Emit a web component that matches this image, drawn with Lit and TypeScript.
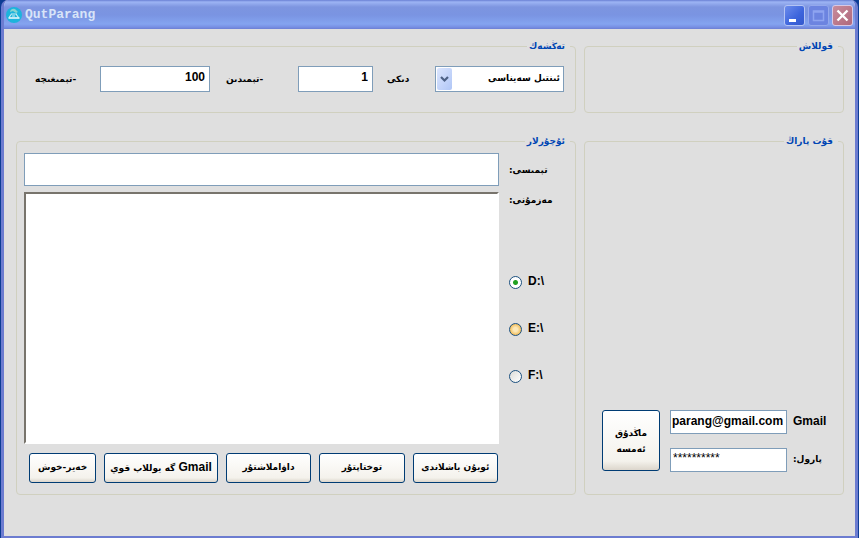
import { LitElement, html, css } from "lit";
import { customElement, state } from "lit/decorators.js";

@customElement("app-root")
class AppRoot extends LitElement {
  @state() private drive = "D";

  static styles = css`
    :host {
      display: block;
      min-height: 100vh;
      padding: 0 1px;
      background: #0c3c94;
      font: bold 12px/16px "Liberation Sans", "DejaVu Sans", sans-serif;
      color: #000;
    }
    :host,
    * {
      box-sizing: border-box;
    }
    .window {
      display: flex;
      flex-direction: column;
      min-height: 100vh;
      border: solid #6c7cd0;
      border-width: 0 3px 2px;
      border-radius: 7px 7px 0 0;
      background: #dfdfdf;
      overflow: hidden;
    }
    .titlebar {
      display: flex;
      align-items: center;
      gap: 3px;
      height: 29px;
      margin: 0 -3px;
      padding: 1px 5px 0 5px;
      background: linear-gradient(#6a80d4 0, #9db4f4 2px, #7d95e0 7px, #7a94e2 15px, #84a4f0 24px, #7890e4 27px, #6c7fd4 29px);
    }
    .logo {
      width: 16px;
      height: 16px;
    }
    .title {
      flex: 1;
      margin: 0;
      font: bold 13px/16px "Liberation Mono", monospace;
      color: #d8e4f8;
    }
    .winbtn {
      width: 21px;
      height: 21px;
      padding: 0;
      border: 1px solid #b4c4f4;
      border-radius: 3px;
      background: linear-gradient(135deg, #6c8cec, #3c64dc 60%, #3458cc);
    }
    .winbtn svg {
      display: block;
      width: 19px;
      height: 19px;
    }
    .max {
      border-color: #94a8ec;
      background: #6c84e0;
    }
    .close {
      border-color: #d8c8e4;
      background: linear-gradient(135deg, #c88c9c, #b0687c);
    }
    .content {
      flex: 1;
      display: grid;
      grid-template-columns: minmax(0, 560fr) minmax(0, 260fr);
      align-content: start;
      gap: 20px 8px;
      padding: 9px 11px 20px 12px;
    }
    .group {
      position: relative;
      isolation: isolate;
      display: flex;
      flex-direction: column;
      min-width: 0;
    }
    .group::before {
      content: "";
      position: absolute;
      z-index: -1;
      inset: 8px 0 0;
      border: 1px solid #d0d0bf;
      border-radius: 4px;
    }
    .caption {
      align-self: flex-end;
      margin: 0 6px 0 0;
      padding: 0 5px 0 2px;
      background: #dfdfdf;
      color: #0046b4;
      font-size: 9px;
      line-height: 16px;
    }
    .uy {
      direction: rtl;
      white-space: nowrap;
      font-family: "DejaVu Sans", sans-serif;
      font-size: 9px;
    }
    .settings {
      display: grid;
      grid-template-columns: 65fr 110fr 88fr 75fr 62fr 129fr;
      align-items: center;
      padding: 12px 12px 21px 19px;
    }
    .settings > * {
      min-width: 0;
    }
    .settings .uy {
      justify-self: start;
    }
    .from {
      padding-left: 16px;
    }
    .of {
      padding-left: 14px;
    }
    .field {
      width: 100%;
      height: 26px;
      padding: 0 4px 4px;
      border: 1px solid #7f9db9;
      border-radius: 0;
      background: #fff;
      font: inherit;
      color: #000;
    }
    .number {
      text-align: right;
    }
    .combo {
      position: relative;
    }
    .select {
      appearance: none;
      display: block;
      padding: 0 3px 2px 20px;
      font-family: "DejaVu Sans", sans-serif;
      font-size: 9px;
    }
    .arrow {
      position: absolute;
      left: 2px;
      top: 2px;
      width: 15px;
      height: 22px;
      pointer-events: none;
    }
    .info {
      display: grid;
      grid-template-columns: minmax(0, 1fr) 57px;
      gap: 6px 10px;
      padding: 4px 10px 0 8px;
      justify-items: start;
    }
    .subject {
      height: 33px;
    }
    .message {
      display: block;
      width: 100%;
      height: 252px;
      resize: none;
      border: 2px solid #fff;
      border-top-color: #78746c;
      border-left-color: #78746c;
      font: inherit;
    }
    .subject-label {
      padding-top: 9px;
    }
    .message-label {
      display: block;
      width: fit-content;
      line-height: 16px;
    }
    .drives {
      display: flex;
      flex-direction: column;
      gap: 31px;
      padding-top: 65px;
    }
    .drive {
      display: flex;
      align-items: center;
      gap: 6px;
    }
    .radio {
      appearance: none;
      width: 13px;
      height: 13px;
      margin: 2px 0 0;
      border: 1px solid #1c5180;
      border-radius: 50%;
      background: linear-gradient(135deg, #dcdcd8, #fff);
    }
    .hot {
      background: radial-gradient(circle, #fce8b8 0 2px, #f0b850 6px);
    }
    .radio:checked {
      background: radial-gradient(circle, #21a121 0 2px, #fff 3px);
    }
    .buttons {
      display: grid;
      grid-template-columns: 67fr 113fr 85fr 85fr 85fr;
      gap: 8px;
      padding: 9px 78px 12px 13px;
    }
    .button {
      min-width: 0;
      height: 30px;
      padding: 0 0 2px;
      border: 1px solid #003c74;
      border-radius: 3px;
      background: linear-gradient(#fff, #f4f2ec 85%, #dcd6cc);
      color: #000;
      font-weight: bold;
    }
    .latin {
      font: bold 12px/16px "Liberation Sans", sans-serif;
    }
    .login {
      flex: 1;
      display: grid;
      grid-template-columns: 58px minmax(0, 117px) auto;
      gap: 14px 10px;
      justify-content: start;
      align-content: end;
      padding: 16px 4px 23px 18px;
    }
    .login .field {
      height: 24px;
      padding: 0 1px 3px;
    }
    .login .password {
      padding: 0 2px 5px;
      font-weight: normal;
    }
    .login-label {
      justify-self: start;
      margin-left: -4px;
      padding-top: 3px;
    }
    .go {
      grid-row: span 2;
      height: 61px;
      padding: 0 8px;
      white-space: normal;
      line-height: 16px;
    }
  `;

  private pick(name: string) {
    this.drive = name;
  }

  render() {
    return html`
      <main class="window">
        <header class="titlebar">
          <svg class="logo" viewBox="0 0 16 16" aria-hidden="true">
            <circle cx="8" cy="8" r="8" fill="#1cb4dc" />
            <path d="M4 5Q5 1 9 2L12 5L10 6L7 4Z" fill="#88d4d0" />
            <path d="M3 10.500L5.500 7M10 7L12.500 10.500M5 7H11M6 9H9" fill="none" stroke="#c4ecf4" stroke-width="1.200" />
            <path d="M2.500 11H13.500" stroke="#f4fcff" stroke-width="1.500" />
          </svg>
          <h1 class="title">QutParang</h1>
          <button class="winbtn" aria-label="Minimize">
            <svg viewBox="0 0 19 19"><path d="M4 13H11V16H4Z" fill="#fff" /></svg>
          </button>
          <button class="winbtn max" aria-label="Maximize" disabled>
            <svg viewBox="0 0 19 19"><path d="M4.500 5H14.500V14.500H4.500ZM4 6H15" fill="none" stroke="#8ea4f0" stroke-width="1.500" /></svg>
          </button>
          <button class="winbtn close" aria-label="Close">
            <svg viewBox="0 0 19 19"><path d="M4.500 4.500L14.500 14.500M14.500 4.500L4.500 14.500" stroke="#fff" stroke-width="2.400" /></svg>
          </button>
        </header>
        <div class="content">
          <section class="group">
            <h2 class="caption uy">تەڭشەك</h2>
            <div class="settings">
              <label class="uy" for="to">-تېمىغىچە</label>
              <input class="field number" id="to" value="100" />
              <label class="uy from" for="from">-تېمىدىن</label>
              <input class="field number" id="from" value="1" />
              <label class="uy of" for="forum">دىكى</label>
              <div class="combo">
                <select class="field select uy" id="forum">
                  <option>ئىنتىل سەيناسى</option>
                </select>
                <svg class="arrow" viewBox="0 0 15 22" aria-hidden="true">
                  <defs>
                    <linearGradient id="g" x2="1" y2="1">
                      <stop stop-color="#dce6fe" />
                      <stop offset="1" stop-color="#b0c6f6" />
                    </linearGradient>
                  </defs>
                  <rect width="15" height="22" rx="2" fill="url(#g)" />
                  <path d="M4 9L7.500 12.500L11 9" fill="none" stroke="#4d6185" stroke-width="2.200" />
                </svg>
              </div>
            </div>
          </section>
          <section class="group">
            <h2 class="caption uy">قوللاش</h2>
          </section>
          <section class="group">
            <h2 class="caption uy">ئۇچۇرلار</h2>
            <div class="info">
              <input class="field subject" id="subject" />
              <label class="uy subject-label" for="subject">تېمىسى:</label>
              <textarea class="message" id="message"></textarea>
              <div>
                <label class="uy message-label" for="message">مەزمۇنى:</label>
                <div class="drives" role="radiogroup" aria-label="Drive">
                  ${["D", "E", "F"].map(
                    (name) => html`
                      <label class="drive">
                        <input
                          class="radio ${name === "E" ? "hot" : ""}"
                          type="radio"
                          name="drive"
                          .checked=${this.drive === name}
                          @change=${() => this.pick(name)}
                        />${name}:\\
                      </label>
                    `
                  )}
                </div>
              </div>
            </div>
            <div class="buttons">
              <button class="button uy">خەير-خوش</button>
              <button class="button uy"><span class="latin">Gmail</span> گە يوللاپ قوي</button>
              <button class="button uy">داۋاملاشتۇر</button>
              <button class="button uy">توختاپتۇر</button>
              <button class="button uy">ئويۇن باشلاندى</button>
            </div>
          </section>
          <section class="group">
            <h2 class="caption uy">قۇت پاراڭ</h2>
            <div class="login">
              <button class="button uy go">ماڭدۇق ئەمسە</button>
              <input class="field" id="mail" value="parang@gmail.com" />
              <label class="login-label" for="mail">Gmail</label>
              <input class="field password" id="password" value="**********" autocomplete="off" />
              <label class="uy login-label" for="password">پارول:</label>
            </div>
          </section>
        </div>
      </main>
    `;
  }
}
